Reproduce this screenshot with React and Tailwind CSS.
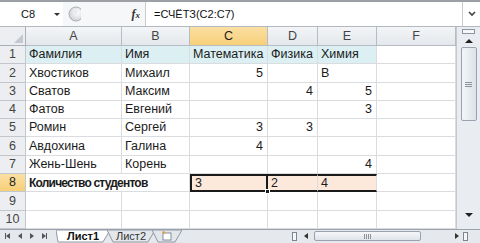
import React from 'react'

const font = "font-['Liberation_Sans',Arial,sans-serif]"

const rows = [
  ['Фамилия', 'Имя', 'Математика', 'Физика', 'Химия'],
  ['Хвостиков', 'Михаил', '5', '', 'В'],
  ['Сватов', 'Максим', '', '4', '5'],
  ['Фатов', 'Евгений', '', '', '3'],
  ['Ромин', 'Сергей', '3', '3', ''],
  ['Авдохина', 'Галина', '4', '', ''],
  ['Жень-Шень', 'Корень', '', '', '4'],
  ['Количество студентов', '', '3', '2', '4'],
  ['', '', '', '', ''],
  ['', '', '', '', ''],
]

const letters = ['A', 'B', 'C', 'D', 'E', 'F']

function Cell({ row, col, value }) {
  const isNum = /^\d+$/.test(value) && row !== 8
  let cls = 'flex items-center border-b border-r border-[#dadcdf] text-[12.5px] text-[#1b1b1b] whitespace-nowrap '
  cls += isNum ? 'justify-end pr-[4px] ' : 'pl-[3px] '
  if (row === 1 && col < 5) cls += 'bg-[#dcf0f3] '
  if (row === 8 && col >= 2 && col <= 4) cls += 'bg-[#fde8dc] border-t-2 border-t-[#1a1a1a] border-b-2 border-b-[#1a1a1a] '
  // the label in A8 runs over B8, so no gridline between them
  if (row === 8 && col === 0) cls = cls.replace('border-r ', '').replace('text-[12.5px]', 'text-[12px] tracking-[-0.8px]') + 'font-bold overflow-visible '
  if (row === 8 && col === 2) cls += 'relative border-l-2 border-l-[#1a1a1a] border-r-2 border-r-[#1a1a1a] '
  return (
    <div className={cls}>
      {value}
      {row === 8 && col === 2 && (
        <span className="absolute -right-[4px] -bottom-[4px] w-[5px] h-[5px] bg-[#1a1a1a] border border-white" />
      )}
    </div>
  )
}

function VScroll() {
  return (
    <div className="w-[24px] flex flex-col items-center bg-[#e9ecf0] border-l border-[#c5c9cf]">
      <div className="h-[8px] w-full flex items-center justify-center">
        <div className="w-[13px] h-[5px] border border-[#8e959e] bg-[#f4f6f8]" />
      </div>
      <div className="h-[12px] w-full flex items-center justify-center">
        <div className="w-0 h-0 border-l-[4px] border-r-[4px] border-b-[4px] border-l-transparent border-r-transparent border-b-[#222]" />
      </div>
      <div className="w-[16px] h-[74px] rounded-[2px] border border-[#9aa2ad] bg-gradient-to-r from-[#f3f5f8] to-[#dde2e8] flex flex-col items-center justify-center gap-[1px]">
        <div className="w-[7px] h-px bg-[#8a929c]" />
        <div className="w-[7px] h-px bg-[#8a929c]" />
        <div className="w-[7px] h-px bg-[#8a929c]" />
      </div>
      <div className="flex-1" />
      <div className="h-[16px] w-full flex items-start justify-center pt-[4px]">
        <div className="w-0 h-0 border-l-[4px] border-r-[4px] border-t-[4px] border-l-transparent border-r-transparent border-t-[#222]" />
      </div>
      <div className="h-[4px]" />
    </div>
  )
}

function Tab({ label, active, width }) {
  return (
    <div className={'relative h-full flex items-center justify-center text-[11px] ' + (active ? 'font-bold text-[#111]' : 'text-[#333]')} style={{ width }}>
      <svg className="absolute inset-0" width={width} height="13" viewBox={`0 0 ${width} 13`}>
        <polygon
          points={`0,0 ${width},0 ${width - 7},12 ${active ? 2 : 6},12`}
          fill={active ? '#ffffff' : '#e3e7ec'}
          stroke="#8f98a3"
          strokeWidth="1"
        />
      </svg>
      <span className="relative">{label}</span>
    </div>
  )
}

function TabBar() {
  const arrow = 'w-0 h-0 border-t-[3px] border-b-[3px] border-t-transparent border-b-transparent'
  return (
    <div className={'h-[14px] flex items-start bg-[#e5e8ec] border-t border-[#9aa2ad] ' + font}>
      <div className="w-[56px] h-[12px] flex items-center gap-[8px] pl-[5px]">
        <div className="flex items-center"><div className="w-px h-[6px] bg-[#555]" /><div className={arrow + ' border-r-[4px] border-r-[#555]'} /></div>
        <div className={arrow + ' border-r-[4px] border-r-[#555]'} />
        <div className={arrow + ' border-l-[4px] border-l-[#555]'} />
        <div className="flex items-center"><div className={arrow + ' border-l-[4px] border-l-[#555]'} /><div className="w-px h-[6px] bg-[#555]" /></div>
      </div>
      <div className="flex h-[13px]">
        <Tab label="Лист1" active width={54} />
        <div className="-ml-[3px]"><Tab label="Лист2" width={48} /></div>
        <div className="-ml-[3px] relative w-[30px] h-full flex items-center justify-center">
          <svg className="absolute inset-0" width="30" height="13" viewBox="0 0 30 13">
            <polygon points="0,0 30,0 23,12 6,12" fill="#e3e7ec" stroke="#8f98a3" />
            <rect x="11" y="3" width="8" height="7" fill="#fff" stroke="#6b7684" strokeWidth="0.8" />
            <path d="M10 2 l3 1 M12 1 l0 3" stroke="#e0a030" strokeWidth="1.2" />
          </svg>
        </div>
      </div>
      <div className="flex-1" />
      <div className="w-[190px] h-[12px] flex items-center">
        <div className="w-[5px] h-[9px] border border-[#7d8590] bg-[#f4f6f8] ml-[2px]" />
        <div className="w-[12px] flex justify-center ml-[3px]">
          <div className={arrow + ' border-r-[4px] border-r-[#333]'} />
        </div>
        <div className="ml-[2px] w-[107px] h-[10px] rounded-[2px] border border-[#9aa2ad] bg-gradient-to-b from-[#f5f7f9] to-[#dfe4ea] flex items-center justify-center gap-[1px]">
          <div className="w-px h-[5px] bg-[#8a929c]" />
          <div className="w-px h-[5px] bg-[#8a929c]" />
          <div className="w-px h-[5px] bg-[#8a929c]" />
          <div className="w-px h-[5px] bg-[#8a929c]" />
        </div>
        <div className="flex-1" />
        <div className="w-[12px] flex justify-center">
          <div className={arrow + ' border-l-[4px] border-l-[#333]'} />
        </div>
        <div className="w-[5px] h-[9px] border border-[#7d8590] bg-[#f4f6f8] mr-[12px]" />
      </div>
    </div>
  )
}

export default function App() {
  return (
    <div className={'w-[480px] h-[243px] flex flex-col overflow-hidden bg-white ' + font}>
      {/* formula bar */}
      <div className="h-[27px] flex items-center border-t-2 border-[#9c9fa3] border-b border-b-[#b3b8be] bg-white">
        <div className="w-[63px] h-full flex items-center relative">
          <span className="text-[11px] text-[#111] ml-[21px]">C8</span>
          <div className="absolute left-[54px] top-[11px] w-0 h-0 border-l-[3px] border-r-[3px] border-t-[3px] border-l-transparent border-r-transparent border-t-[#333]" />
        </div>
        <div className="w-[83px] h-full flex items-center bg-[#f6f7f8] border-r border-[#c8ccd1]">
          <svg width="14" height="16" viewBox="0 0 14 16" className="ml-[4px]">
            <defs>
              <radialGradient id="g" cx="0.6" cy="0.4" r="0.7">
                <stop offset="0" stopColor="#ffffff" />
                <stop offset="1" stopColor="#c9cdd2" />
              </radialGradient>
            </defs>
            <circle cx="9" cy="8" r="7" fill="url(#g)" stroke="#a9aeb4" />
            <circle cx="9" cy="6" r="2" fill="#e8eaed" />
          </svg>
          <div className="flex-1" />
          <span className="font-['Liberation_Serif',serif] italic font-bold text-[12px] text-[#333] mr-[5px]">f<span className="text-[9px]">x</span></span>
        </div>
        <div className="flex-1 h-full flex items-center pl-[8px] text-[11px] text-[#111]">=СЧЁТЗ(C2:C7)</div>
        <div className="w-[18px] h-full flex items-center justify-center border-l border-[#c8ccd1]">
          <svg width="8" height="6" viewBox="0 0 8 6"><path d="M1 1 L4 4 L7 1" stroke="#444" strokeWidth="1.6" fill="none" /></svg>
        </div>
      </div>

      <div className="flex flex-1 min-h-0">
        <div className="w-[456px] grid grid-cols-[26px_96px_68px_78px_50px_59px_79px] grid-rows-[19px_repeat(10,18.3px)]">
          {/* corner */}
          <div className="relative bg-[#eceef1] border-r border-b border-[#a9b0b8]">
            <svg className="absolute right-[2px] bottom-[2px]" width="9" height="9" viewBox="0 0 9 9"><polygon points="9,0 9,9 0,9" fill="#c4c9cf" /></svg>
          </div>
          {letters.map((l, i) => (
            <div
              key={l}
              className={'flex items-center justify-center text-[12.5px] border-r border-b border-[#b6bcc4] ' + (i === 2 ? 'bg-gradient-to-b from-[#fbe0a2] to-[#f6cf78] text-[#222]' : 'bg-gradient-to-b from-[#f3f5f7] to-[#e4e8ec] text-[#444]')}
            >
              {l}
            </div>
          ))}
          {rows.map((r, ri) => {
            const n = ri + 1
            return (
              <React.Fragment key={n}>
                <div className={'flex items-center justify-center text-[12.5px] border-r border-b border-[#c2c7ce] ' + (n === 8 ? 'bg-gradient-to-b from-[#fbe0a2] to-[#f6cf78] text-[#222]' : 'bg-[#eceef1] text-[#444]')}>
                  {n}
                </div>
                {r.map((v, ci) => (
                  <Cell key={ci} row={n} col={ci} value={v} />
                ))}
                <Cell row={n} col={5} value="" />
              </React.Fragment>
            )
          })}
        </div>
        <VScroll />
      </div>

      <TabBar />
    </div>
  )
}
